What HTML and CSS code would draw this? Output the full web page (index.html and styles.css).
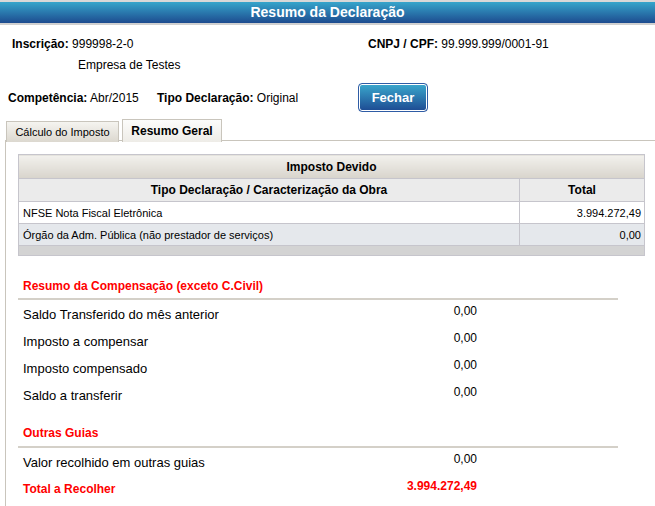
FILE: index.html
```html
<!DOCTYPE html>
<html>
<head>
    <meta charset="utf-8">
    <link rel="stylesheet" href="styles.css">
</head>
<body>
    <div class="titlebar">Resumo da Declaração</div>

    <div class="info">
        <div class="info-row">
            <div class="info-left"><b>Inscrição:</b> 999998-2-0</div>
            <div><b>CNPJ / CPF:</b> 99.999.999/0001-91</div>
        </div>
        <div class="company">Empresa de Testes</div>
        <div class="info-row info-bottom">
            <div class="comp"><b>Competência:</b> Abr/2015</div>
            <div class="tipo"><b>Tipo Declaração:</b> Original</div>
            <button class="btn">Fechar</button>
        </div>
    </div>

    <div class="tabs">
        <div class="tab">Cálculo do Imposto</div>
        <div class="tab active">Resumo Geral</div>
    </div>

    <div class="panel">
        <table class="grid">
            <tr class="caption"><td colspan="2">Imposto Devido</td></tr>
            <tr class="head">
                <td>Tipo Declaração / Caracterização da Obra</td>
                <td class="col-total">Total</td>
            </tr>
            <tr class="row">
                <td>NFSE Nota Fiscal Eletrônica</td>
                <td class="num">3.994.272,49</td>
            </tr>
            <tr class="row alt">
                <td>Órgão da Adm. Pública (não prestador de serviços)</td>
                <td class="num">0,00</td>
            </tr>
            <tr class="foot"><td colspan="2"></td></tr>
        </table>

        <div class="section">
            <div class="sec-title">Resumo da Compensação (exceto C.Civil)</div>
            <div class="line"><span class="lbl">Saldo Transferido do mês anterior</span><span class="val">0,00</span></div>
            <div class="line"><span class="lbl">Imposto a compensar</span><span class="val">0,00</span></div>
            <div class="line"><span class="lbl">Imposto compensado</span><span class="val">0,00</span></div>
            <div class="line"><span class="lbl">Saldo a transferir</span><span class="val">0,00</span></div>
        </div>

        <div class="section second">
            <div class="sec-title">Outras Guias</div>
            <div class="line"><span class="lbl">Valor recolhido em outras guias</span><span class="val">0,00</span></div>
            <div class="line total"><span class="lbl">Total a Recolher</span><span class="val">3.994.272,49</span></div>
        </div>
    </div>
</body>
</html>
```

FILE: styles.css
```css
html, body {
    overflow: hidden;
}
body {
    margin: 0;
    font-family: "Liberation Sans", Arial, sans-serif;
    font-size: 12px;
    color: #000;
    background: #fff;
}
.titlebar {
    height: 21px;
    line-height: 21px;
    border-top: 2px solid #d8d8d8;
    border-bottom: 2px solid #d0d0d0;
    background: linear-gradient(#36a5cb, #1d4b8f);
    color: #fff;
    text-align: center;
    font-weight: bold;
    font-size: 14px;
}
.info {
    padding-top: 12px;
}
.info-row {
    display: flex;
    line-height: 14px;
    padding-left: 12px;
}
.info-left {
    width: 356px;
}
.company {
    margin-top: 7px;
    padding-left: 78px;
    line-height: 14px;
}
.info-bottom {
    margin-top: 11px;
    padding-left: 8px;
    align-items: center;
}
.comp {
    width: 149px;
}
.tipo {
    width: 201px;
}
.btn {
    width: 70px;
    height: 29px;
    border: 1px solid #2f5ca5;
    border-radius: 4px;
    box-shadow: inset 0 0 0 1px #fff;
    background: linear-gradient(#3aa8cd, #1d4a92);
    color: #fff;
    font-family: "Liberation Sans", Arial, sans-serif;
    font-weight: bold;
    font-size: 13px;
    padding: 0;
}
.tabs {
    display: flex;
    align-items: flex-end;
    margin-top: 7px;
    padding-left: 6px;
    position: relative;
    z-index: 1;
    margin-bottom: -2px;
}
.tab {
    box-sizing: border-box;
    width: 113px;
    height: 21px;
    line-height: 20px;
    padding: 0;
    text-align: center;
    white-space: nowrap;
    border: 1px solid #c9c5bc;
    border-bottom: none;
    background: linear-gradient(#f5f4f0, #dcd8cf);
    font-size: 11px;
    margin-right: 3px;
}
.tab.active {
    width: 100px;
    height: 23px;
    line-height: 22px;
    background: linear-gradient(#fcfcfb, #eeece7);
    font-size: 12px;
    font-weight: bold;
}
.panel {
    margin-left: 5px;
    width: 700px;
    border-left: 1px solid #c9c5bc;
    border-top: 1px solid #c9c5bc;
    padding: 13px 0 0 12px;
    height: 400px;
}
.grid {
    width: 627px;
    border-collapse: collapse;
    border: 1px solid #c6c5cc;
    font-size: 11px;
}
.grid td {
    border: 1px solid #c6c5cc;
    padding: 0 4px;
}
.caption td {
    height: 23px;
    text-align: center;
    font-size: 12px;
    font-weight: bold;
    background: linear-gradient(#f2f1ed, #d8d4cc);
}
.head td {
    height: 22px;
    text-align: center;
    font-size: 12px;
    font-weight: bold;
    background: #ebebeb;
}
.head .col-total {
    width: 116px;
}
.row td {
    height: 21px;
    background: #fff;
}
.row.alt td {
    background: #e5e8ec;
}
.grid .num {
    text-align: right;
    padding-right: 3px;
}
.foot td {
    height: 9px;
    padding: 0;
    background: #d3d3d3;
}
.section {
    width: 600px;
}
.sec-title {
    margin-top: 22px;
    padding: 0 0 4px 5px;
    line-height: 16px;
    border-bottom: 2px solid #d4d0c8;
    color: #ff0000;
    font-weight: bold;
}
.section.second .sec-title {
    margin-top: 17px;
    padding-bottom: 5px;
}
.line {
    display: grid;
    grid-template-columns: 340px 114px;
    height: 27px;
    padding-left: 5px;
}
.lbl {
    padding-top: 7px;
    line-height: 15px;
    font-size: 13px;
}
.val {
    padding-top: 4px;
    line-height: 14px;
    text-align: right;
}
.line.total .lbl,
.line.total .val {
    color: #ff0000;
    font-weight: bold;
    font-size: 12px;
}
```
